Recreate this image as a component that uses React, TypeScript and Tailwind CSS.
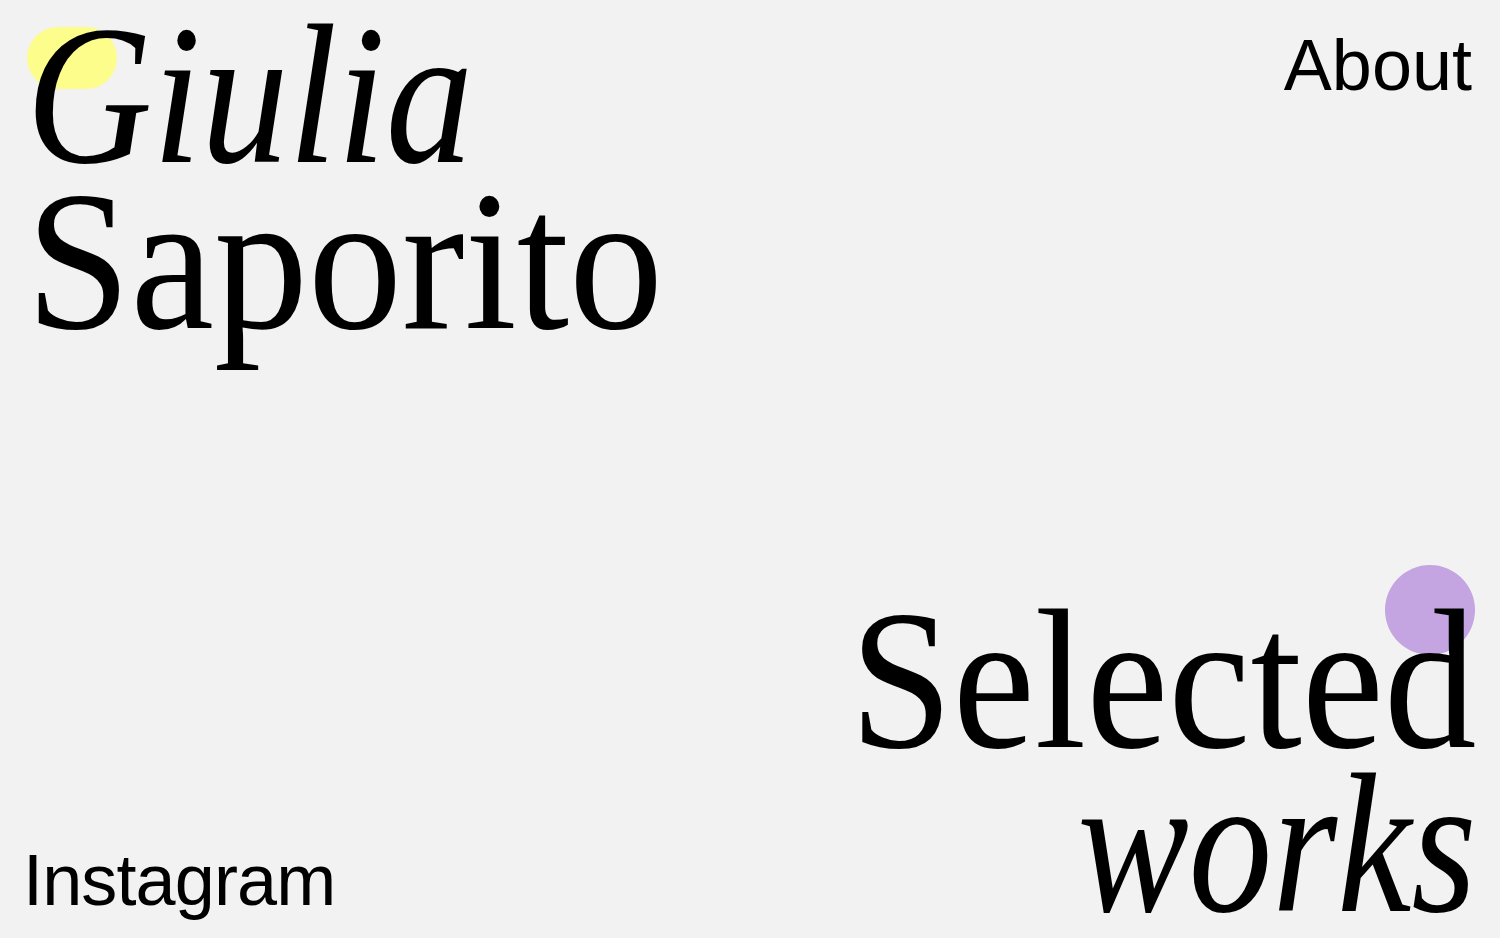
import React from 'react';

const serif = { fontFamily: '"Liberation Serif", "DejaVu Serif", serif' };
const sans = { fontFamily: '"Liberation Sans", Arial, sans-serif' };

export default function App() {
  return (
    <div className="relative h-[938px] w-full overflow-hidden bg-[#f2f2f2] text-black flex flex-col justify-between">
      {/* decorative blobs */}
      <div className="absolute left-[27px] top-[27px] w-[90px] h-[62px] rounded-full bg-[#fdfd8c]" />
      <div className="absolute left-[1385px] top-[565px] w-[90px] h-[90px] rounded-full bg-[#c4a4e1]" />

      {/* Top row */}
      <div className="relative flex justify-between items-start">
        <h1 className="pt-[12px] pl-[26px] font-normal" style={serif}>
          <span className="block italic text-[200px] leading-[166px] origin-left scale-x-[0.875]">Giulia</span>
          <span className="block text-[200px] leading-[166px] origin-left scale-x-[0.94]">Saporito</span>
        </h1>
        <a className="pt-[29px] pr-[28px] text-[72px] leading-[72px]" style={sans}>
          About
        </a>
      </div>

      {/* Bottom row */}
      <div className="relative flex justify-between items-end">
        <a className="mb-[22px] ml-[23px] text-[72px] leading-[72px] tracking-[-0.012em]" style={sans}>
          Instagram
        </a>
        <h2 className="mb-[12px] pr-[24px] text-right font-normal" style={serif}>
          <span className="block text-[200px] leading-[164px] origin-right scale-x-[0.925]">Selected</span>
          <span className="block italic text-[200px] leading-[164px] origin-right scale-x-[0.835]">works</span>
        </h2>
      </div>
    </div>
  );
}
